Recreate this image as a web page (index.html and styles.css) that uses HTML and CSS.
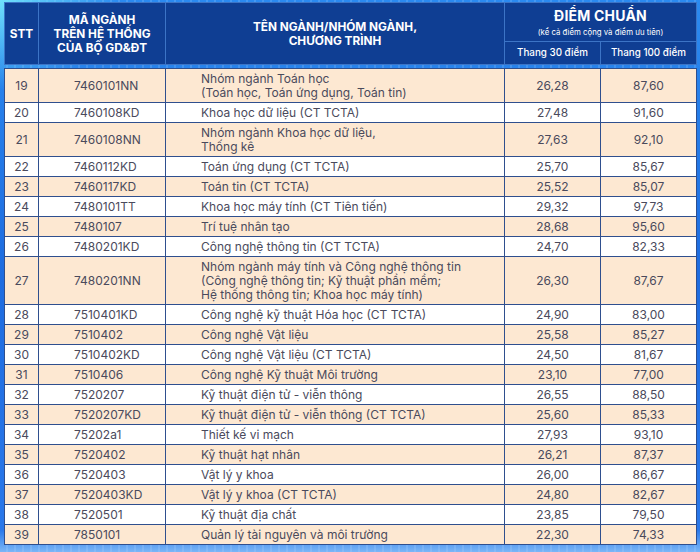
FILE: index.html
```html
<!DOCTYPE html>
<html lang="vi">
<head>
<meta charset="utf-8">
<title>Điểm chuẩn</title>
<link rel="stylesheet" href="styles.css">
</head>
<body>
<div class="page">
  <table class="grid head">
    <colgroup><col class="c1"><col class="c2"><col class="c3"><col class="c4"><col class="c5"></colgroup>
    <tr class="h1">
      <th rowspan="2">STT</th>
      <th rowspan="2">MÃ NGÀNH<br>TRÊN HỆ THỐNG<br>CỦA BỘ GD&amp;ĐT</th>
      <th rowspan="2">TÊN NGÀNH/NHÓM NGÀNH,<br>CHƯƠNG TRÌNH</th>
      <th colspan="2" class="dc"><span class="big">ĐIỂM CHUẨN</span><br><span class="small">(kể cả điểm cộng và điểm ưu tiên)</span></th>
    </tr>
    <tr class="h2">
      <th class="sub">Thang 30 điểm</th>
      <th class="sub">Thang 100 điểm</th>
    </tr>
  </table>
  <table class="grid body">
    <colgroup><col class="c1"><col class="c2"><col class="c3"><col class="c4"><col class="c5"></colgroup>
    <tr class="odd"><td>19</td><td class="code">7460101NN</td><td class="name">Nhóm ngành Toán học<br>(Toán học, Toán ứng dụng, Toán tin)</td><td>26,28</td><td>87,60</td></tr>
    <tr><td>20</td><td class="code">7460108KD</td><td class="name">Khoa học dữ liệu (CT TCTA)</td><td>27,48</td><td>91,60</td></tr>
    <tr class="odd"><td>21</td><td class="code">7460108NN</td><td class="name">Nhóm ngành Khoa học dữ liệu,<br>Thống kê</td><td>27,63</td><td>92,10</td></tr>
    <tr><td>22</td><td class="code">7460112KD</td><td class="name">Toán ứng dụng (CT TCTA)</td><td>25,70</td><td>85,67</td></tr>
    <tr class="odd"><td>23</td><td class="code">7460117KD</td><td class="name">Toán tin (CT TCTA)</td><td>25,52</td><td>85,07</td></tr>
    <tr><td>24</td><td class="code">7480101TT</td><td class="name">Khoa học máy tính (CT Tiên tiến)</td><td>29,32</td><td>97,73</td></tr>
    <tr class="odd"><td>25</td><td class="code">7480107</td><td class="name">Trí tuệ nhân tạo</td><td>28,68</td><td>95,60</td></tr>
    <tr><td>26</td><td class="code">7480201KD</td><td class="name">Công nghệ thông tin (CT TCTA)</td><td>24,70</td><td>82,33</td></tr>
    <tr class="odd"><td>27</td><td class="code">7480201NN</td><td class="name">Nhóm ngành máy tính và Công nghệ thông tin<br>(Công nghệ thông tin; Kỹ thuật phần mềm;<br>Hệ thống thông tin; Khoa học máy tính)</td><td>26,30</td><td>87,67</td></tr>
    <tr><td>28</td><td class="code">7510401KD</td><td class="name">Công nghệ kỹ thuật Hóa học (CT TCTA)</td><td>24,90</td><td>83,00</td></tr>
    <tr class="odd"><td>29</td><td class="code">7510402</td><td class="name">Công nghệ Vật liệu</td><td>25,58</td><td>85,27</td></tr>
    <tr><td>30</td><td class="code">7510402KD</td><td class="name">Công nghệ Vật liệu (CT TCTA)</td><td>24,50</td><td>81,67</td></tr>
    <tr class="odd"><td>31</td><td class="code">7510406</td><td class="name">Công nghệ Kỹ thuật Môi trường</td><td>23,10</td><td>77,00</td></tr>
    <tr><td>32</td><td class="code">7520207</td><td class="name">Kỹ thuật điện tử - viễn thông</td><td>26,55</td><td>88,50</td></tr>
    <tr class="odd"><td>33</td><td class="code">7520207KD</td><td class="name">Kỹ thuật điện tử - viễn thông (CT TCTA)</td><td>25,60</td><td>85,33</td></tr>
    <tr><td>34</td><td class="code">75202a1</td><td class="name">Thiết kế vi mạch</td><td>27,93</td><td>93,10</td></tr>
    <tr class="odd"><td>35</td><td class="code">7520402</td><td class="name">Kỹ thuật hạt nhân</td><td>26,21</td><td>87,37</td></tr>
    <tr><td>36</td><td class="code">7520403</td><td class="name">Vật lý y khoa</td><td>26,00</td><td>86,67</td></tr>
    <tr class="odd"><td>37</td><td class="code">7520403KD</td><td class="name">Vật lý y khoa (CT TCTA)</td><td>24,80</td><td>82,67</td></tr>
    <tr><td>38</td><td class="code">7520501</td><td class="name">Kỹ thuật địa chất</td><td>23,85</td><td>79,50</td></tr>
    <tr class="odd"><td>39</td><td class="code">7850101</td><td class="name">Quản lý tài nguyên và môi trường</td><td>22,30</td><td>74,33</td></tr>
  </table>
</div>
</body>
</html>
```
FILE: styles.css
```css
html, body {
  margin: 0;
  padding: 0;
}
body {
  width: 700px;
  height: 552px;
  overflow: hidden;
  font-family: Inter, "Open Sans", "Liberation Sans", sans-serif;
  background:
    radial-gradient(ellipse 120px 90px at 0 0, #6fe0fb 0%, rgba(111,224,251,0) 100%),
    repeating-linear-gradient(90deg, rgba(255,255,255,0) 0 6px, rgba(190,220,255,0.18) 6px 8px),
    linear-gradient(180deg, #2b8af0 0%, #1e6ce0 50%, #2a78ea 96%, #7ab6f7 100%);
}
.page {
  padding: 2px 4px 0 4px;
  display: flex;
  flex-direction: column;
  gap: 3px;
}
.grid {
  width: 692px;
  table-layout: fixed;
  border-collapse: collapse;
}
.c1 { width: 34px; }
.c2 { width: 127px; }
.c3 { width: 339px; }
.c4 { width: 96px; }
.c5 { width: 96px; }

.head th {
  background: #0f3e93;
  color: #ffffff;
  border: 1px solid #3c74c6;
  font-weight: 700;
  font-size: 11.8px;
  line-height: 14px;
  padding: 0;
  text-align: center;
  vertical-align: middle;
}
.head .h1 { height: 39px; }
.head .h2 { height: 23px; }
.head .dc { padding-top: 2px; }
.head .big { font-size: 14px; line-height: 16px; letter-spacing: 0.2px; }
.head .small { font-size: 7.8px; font-weight: 400; line-height: 12px; }
.head .sub { font-size: 9.8px; font-weight: 500; }

.body td {
  border: 1px solid #2f4f8e;
  background: #ffffff;
  color: #4a4a5c;
  font-size: 12px;
  line-height: 14px;
  padding: 3px 0 2px;
  text-align: center;
  vertical-align: middle;
}
.body tr.odd td { background: #fde8d2; }
.body td.code { text-align: left; padding-left: 35px; }
.body td.name { text-align: left; padding-left: 35px; }
```
